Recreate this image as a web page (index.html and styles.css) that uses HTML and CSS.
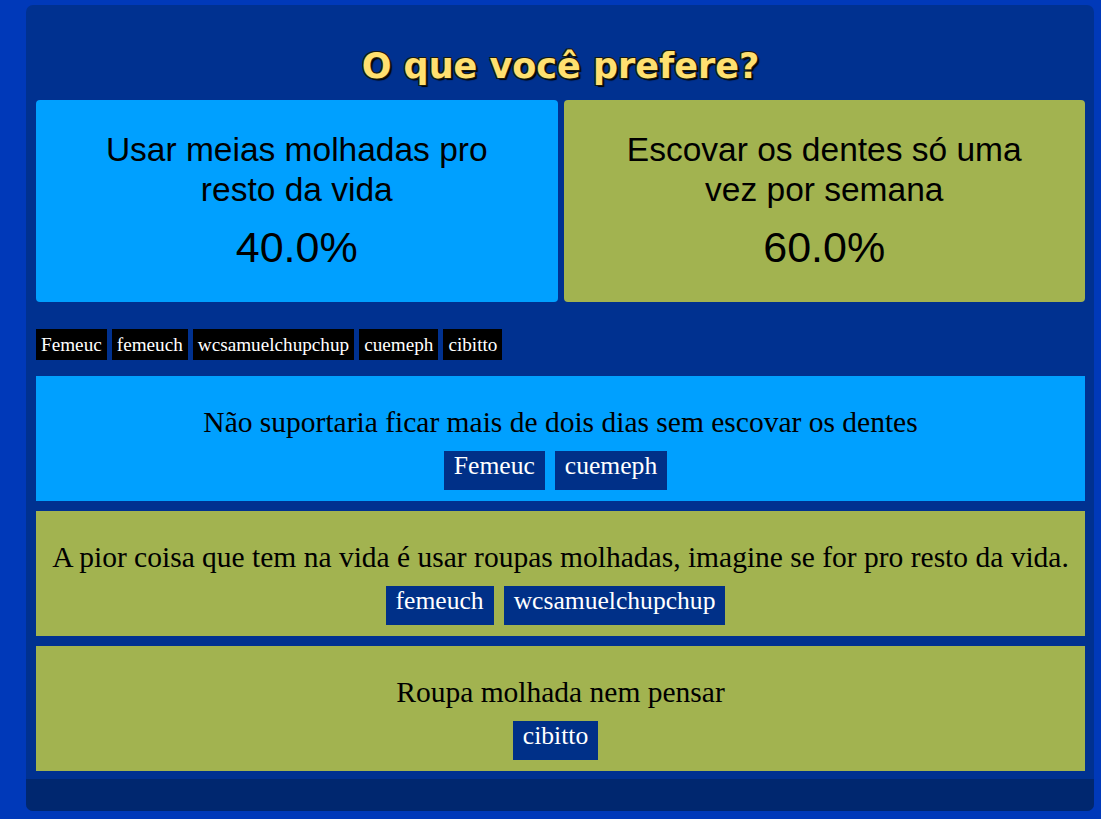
FILE: index.html
```html
<!DOCTYPE html>
<html lang="pt-BR">
<head>
<meta charset="utf-8">
<title>O que você prefere?</title>
<link rel="stylesheet" href="styles.css">
</head>
<body>
<div class="page">
  <h1 class="title">O que você prefere?</h1>
  <div class="options">
    <div class="option option-blue">
      <div class="option-text">Usar meias molhadas pro resto da vida</div>
      <div class="option-pct">40.0%</div>
    </div>
    <div class="option option-green">
      <div class="option-text">Escovar os dentes só uma vez por semana</div>
      <div class="option-pct">60.0%</div>
    </div>
  </div>
  <div class="voters">
    <span class="voter">Femeuc</span>
    <span class="voter">femeuch</span>
    <span class="voter">wcsamuelchupchup</span>
    <span class="voter">cuemeph</span>
    <span class="voter">cibitto</span>
  </div>
  <div class="comments">
    <div class="comment comment-blue">
      <p class="comment-text">Não suportaria ficar mais de dois dias sem escovar os dentes</p>
      <div class="comment-tags">
        <span class="comment-tag">Femeuc</span>
        <span class="comment-tag">cuemeph</span>
      </div>
    </div>
    <div class="comment comment-green">
      <p class="comment-text">A pior coisa que tem na vida é usar roupas molhadas, imagine se for pro resto da vida.</p>
      <div class="comment-tags">
        <span class="comment-tag">femeuch</span>
        <span class="comment-tag">wcsamuelchupchup</span>
      </div>
    </div>
    <div class="comment comment-green">
      <p class="comment-text">Roupa molhada nem pensar</p>
      <div class="comment-tags">
        <span class="comment-tag">cibitto</span>
      </div>
    </div>
  </div>
  <div class="footer"></div>
</div>
</body>
</html>
```

FILE: styles.css
```css
html, body {
  margin: 0;
  padding: 0;
}

body {
  background: #0039b9;
  padding: 5px 7px 9px 26px;
  height: 819px;
  box-sizing: border-box;
  overflow: hidden;
}

.page {
  background: #003190;
  border-radius: 7px;
  padding: 40px 9px 0 10px;
  display: flex;
  flex-direction: column;
}

.title {
  margin: 0 0 13px;
  font-family: "DejaVu Sans", sans-serif;
  font-weight: bold;
  font-size: 35px;
  line-height: 42px;
  text-align: center;
  color: #ffe070;
  text-shadow: -1px -1px 0 #1a1a10, 1px -1px 0 #1a1a10, -1px 1px 0 #1a1a10, 1px 1px 0 #1a1a10, 2px 2px 1px #000;
}

.options {
  display: flex;
  gap: 6px;
}

.option {
  flex: 1;
  border-radius: 4px;
  padding: 30px 50px 31px;
  text-align: center;
  font-family: "Liberation Sans", Arial, sans-serif;
  color: #000;
}

.option-blue { background: #00a0ff; }
.option-green { background: #a2b350; }

.option-text {
  font-size: 33.5px;
  line-height: 40px;
}

.option-pct {
  margin-top: 13px;
  font-size: 43px;
  line-height: 48px;
}

.voters {
  display: flex;
  gap: 5px;
  margin: 27px 0 16px;
}

.voter {
  background: #000;
  color: #fff;
  font-family: "Liberation Serif", "Times New Roman", serif;
  font-size: 19.2px;
  line-height: 23px;
  padding: 4px 5px;
}

.comments {
  display: flex;
  flex-direction: column;
  gap: 10px;
}

.comment {
  padding: 30px 10px 11px;
  text-align: center;
  font-family: "Liberation Serif", "Times New Roman", serif;
}

.comment-blue { background: #00a0ff; }
.comment-green { background: #a2b350; }

.comment-text {
  margin: 0 0 12px;
  font-size: 29.5px;
  line-height: 33px;
  color: #000;
}

.comment-tags {
  display: flex;
  justify-content: center;
}

.comment-tag {
  background: #003088;
  color: #fff;
  font-size: 25.6px;
  line-height: 29px;
  padding: 0 10px 10px;
  margin-right: 10px;
}

.footer {
  margin: 8px -9px 0 -10px;
  height: 32px;
  background: #00276f;
  border-radius: 0 0 7px 7px;
}
```
